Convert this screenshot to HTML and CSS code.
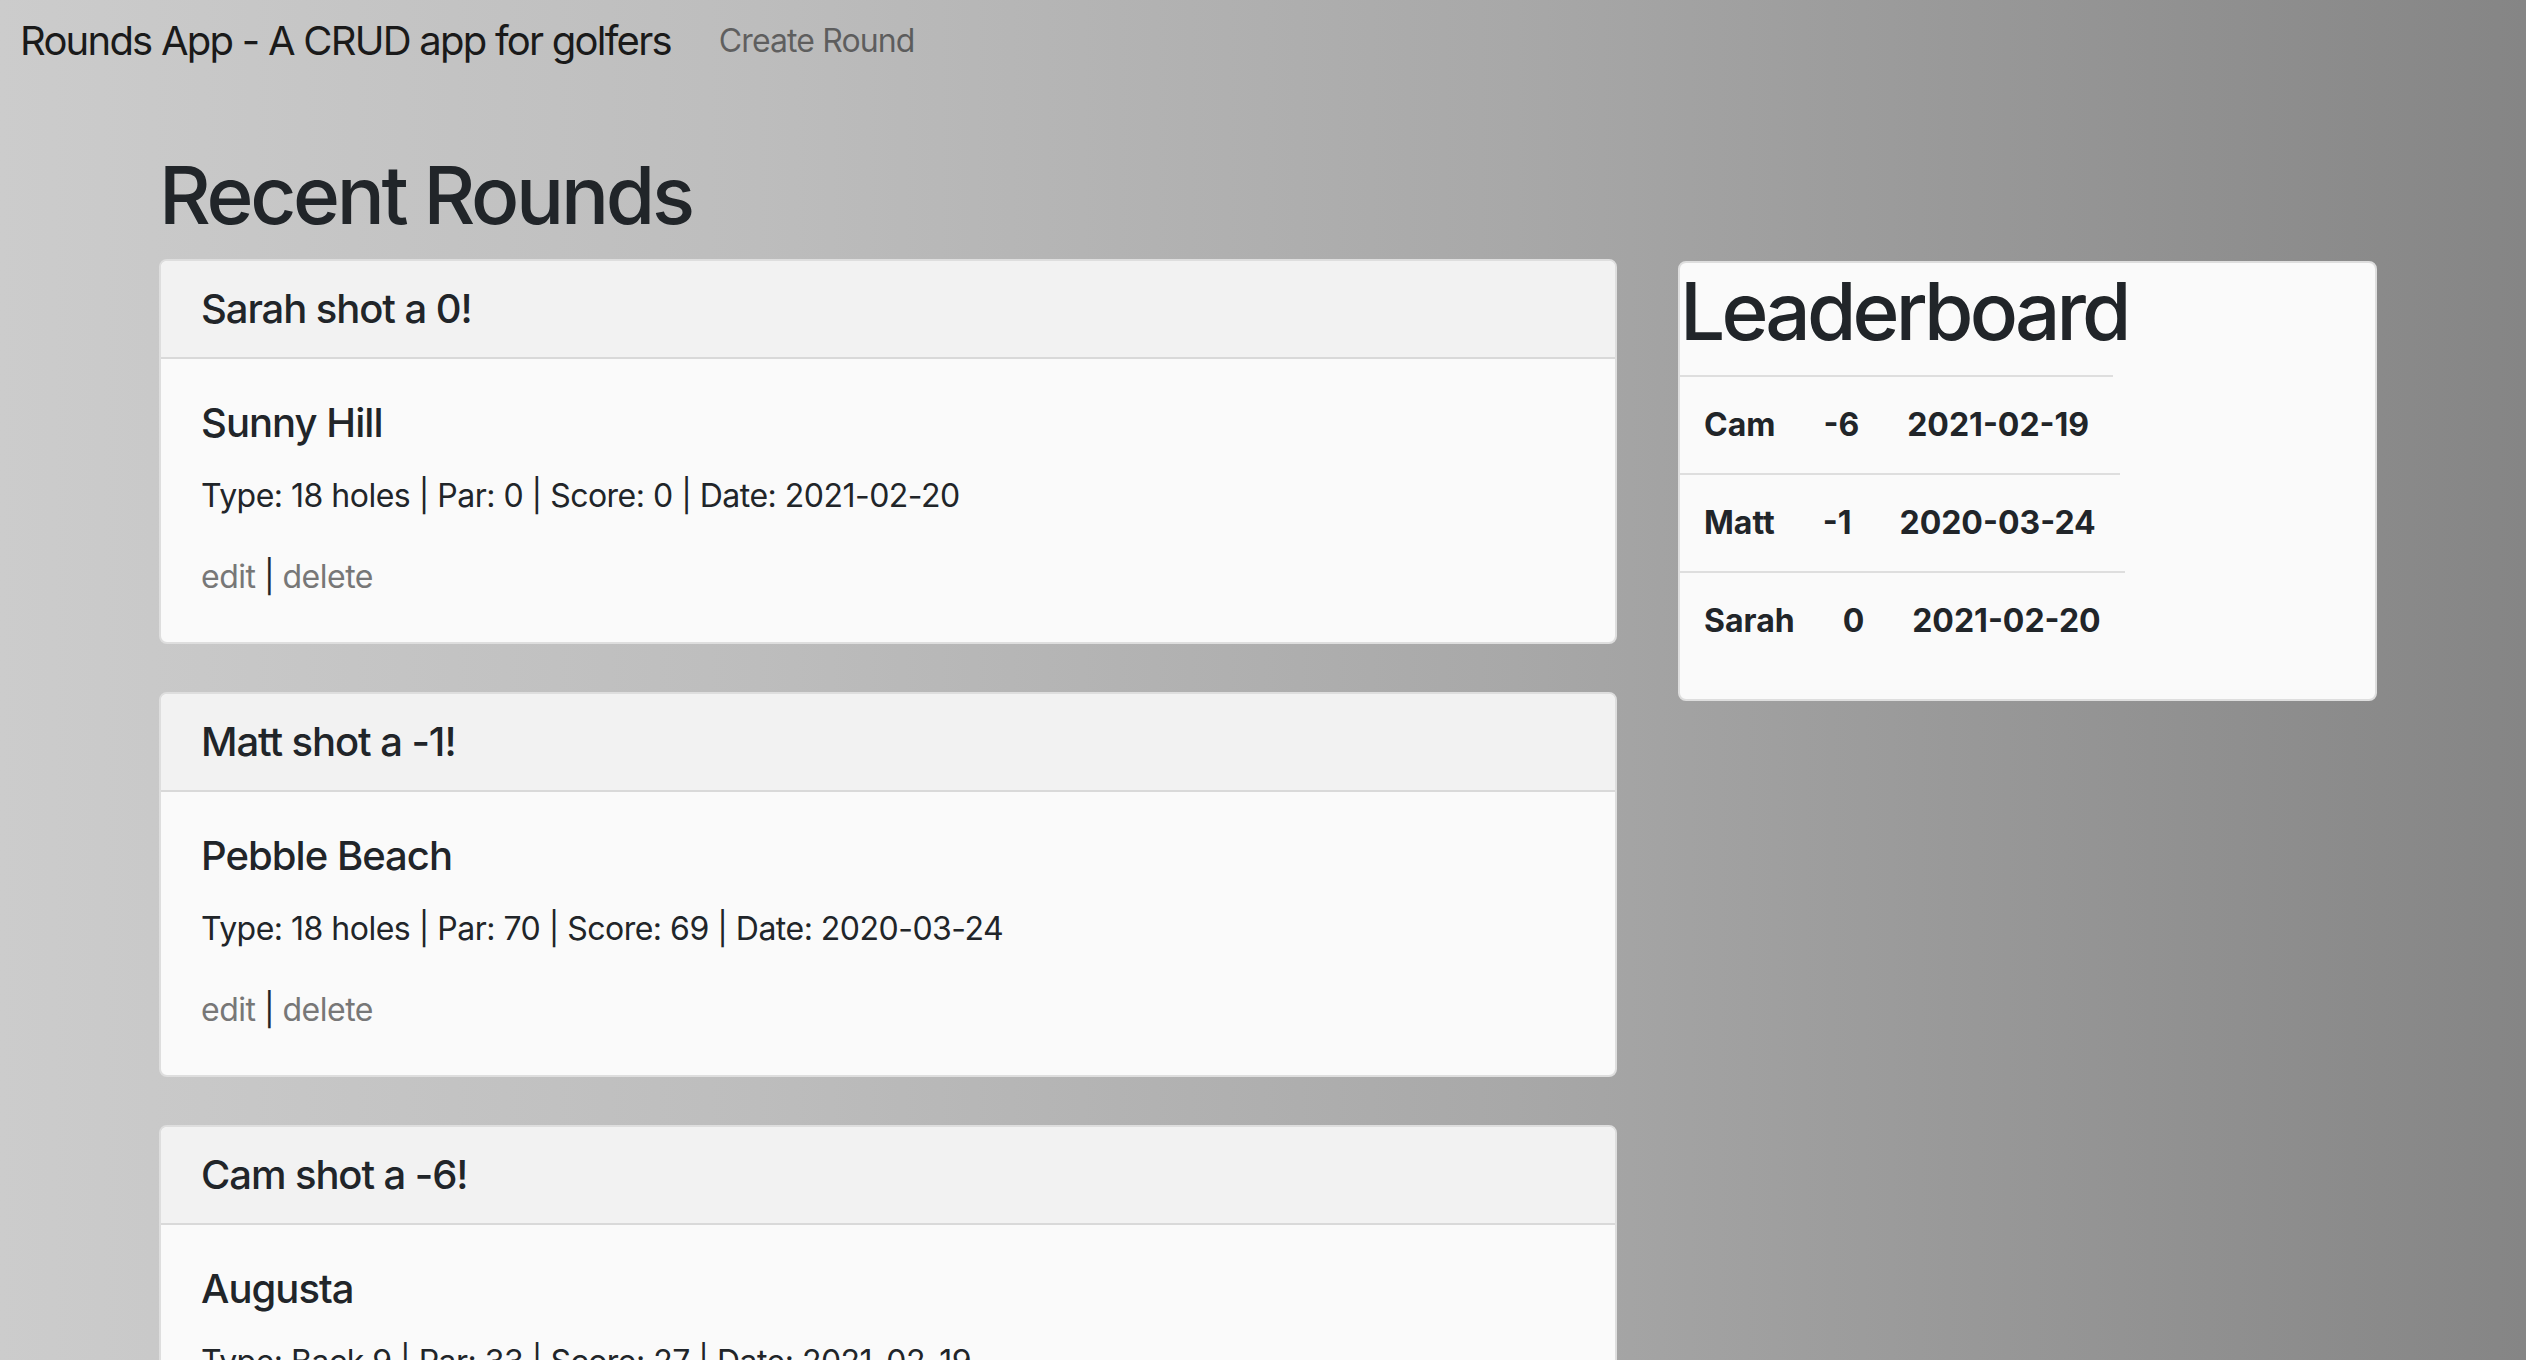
FILE: index.html
```html
<!DOCTYPE html>
<html lang="en">
<head>
<meta charset="utf-8">
<title>Rounds App</title>
<link rel="stylesheet" href="styles.css">
</head>
<body>
<nav class="navbar">
  <a class="brand" href="#">Rounds App - A CRUD app for golfers</a>
  <a class="nav-link" href="#">Create Round</a>
</nav>
<main class="container">
  <h1 class="page-title">Recent Rounds</h1>
  <div class="row">
    <section class="rounds">
      <article class="card">
        <header class="card-header">Sarah shot a 0!</header>
        <div class="card-body">
          <h5 class="card-title">Sunny Hill</h5>
          <p class="card-text">Type: 18 holes | Par: 0 | Score: 0 | Date: 2021-02-20</p>
          <div class="actions"><a href="#">edit</a> | <a href="#">delete</a></div>
        </div>
      </article>
      <article class="card">
        <header class="card-header">Matt shot a -1!</header>
        <div class="card-body">
          <h5 class="card-title">Pebble Beach</h5>
          <p class="card-text">Type: 18 holes | Par: 70 | Score: 69 | Date: 2020-03-24</p>
          <div class="actions"><a href="#">edit</a> | <a href="#">delete</a></div>
        </div>
      </article>
      <article class="card">
        <header class="card-header">Cam shot a -6!</header>
        <div class="card-body">
          <h5 class="card-title">Augusta</h5>
          <p class="card-text">Type: Back 9 | Par: 33 | Score: 27 | Date: 2021-02-19</p>
          <div class="actions"><a href="#">edit</a> | <a href="#">delete</a></div>
        </div>
      </article>
    </section>
    <aside class="leaderboard">
      <h1 class="lb-title">Leaderboard</h1>
      <table class="lb-row"><tr><td>Cam</td><td>-6</td><td>2021-02-19</td></tr></table>
      <table class="lb-row"><tr><td>Matt</td><td>-1</td><td>2020-03-24</td></tr></table>
      <table class="lb-row"><tr><td>Sarah</td><td>0</td><td>2021-02-20</td></tr></table>
    </aside>
  </div>
</main>
</body>
</html>
```

FILE: styles.css
```css
* { box-sizing: border-box; }
html, body { margin: 0; padding: 0; }
body {
  font-family: Inter, "Noto Sans", "Liberation Sans", sans-serif;
  font-size: 32px;
  line-height: 1.5;
  color: #212529;
  letter-spacing: -0.016em;
  min-height: 1360px;
  background: linear-gradient(90deg, #cccccc 0%, #bdbdbd 30%, #a8a8a8 60%, #858585 100%);
  overflow: hidden;
}
a { text-decoration: none; }

.navbar {
  display: flex;
  align-items: center;
  padding: 14px 20px 0;
  height: 68px;
}
.brand {
  font-size: 40px;
  line-height: 60px;
  color: #1a1a1a;
  letter-spacing: -0.044em;
  margin-right: 48px;
}
.nav-link {
  font-size: 32px;
  line-height: 60px;
  letter-spacing: -0.028em;
  color: rgba(0,0,0,.5);
}

.container {
  padding-left: 159px;
}
.page-title {
  font-size: 80px;
  font-weight: 500;
  line-height: 1.2;
  letter-spacing: -0.041em;
  margin: 79px 0 16px;
}
.row {
  display: flex;
  align-items: flex-start;
}
.rounds {
  width: 1458px;
  display: flex;
  flex-direction: column;
  gap: 48px;
}
.card {
  background: #fafafa;
  border: 2px solid #dedede;
  border-radius: 8px;
  overflow: hidden;
}
.card-header {
  background: #f2f2f2;
  border-bottom: 2px solid #d9d9d9;
  padding: 24px 40px;
  font-size: 40px;
  font-weight: 500;
  line-height: 48px;
  letter-spacing: -0.027em;
}
.card-body {
  padding: 40px 40px 41px;
}
.card-title {
  font-size: 40px;
  font-weight: 500;
  line-height: 48px;
  letter-spacing: -0.024em;
  margin: 0 0 25px;
}
.card-text {
  margin: 0 0 33px;
  line-height: 48px;
}
.actions {
  line-height: 48px;
}
.actions a { color: #777777; }

.leaderboard {
  width: 699px;
  margin-left: 61px;
  margin-top: 2px;
  background: #fafafa;
  border: 2px solid #dedede;
  border-radius: 8px;
  padding-bottom: 30px;
}
.lb-title {
  font-size: 80px;
  font-weight: 500;
  line-height: 1.2;
  letter-spacing: -0.048em;
  margin: 0 0 16px;
}
.lb-row {
  border-collapse: collapse;
  font-weight: 700;
  letter-spacing: 0;
}
.lb-row td {
  border-top: 2px solid #dedede;
  padding: 24px 24px;
  line-height: 48px;
}
```
